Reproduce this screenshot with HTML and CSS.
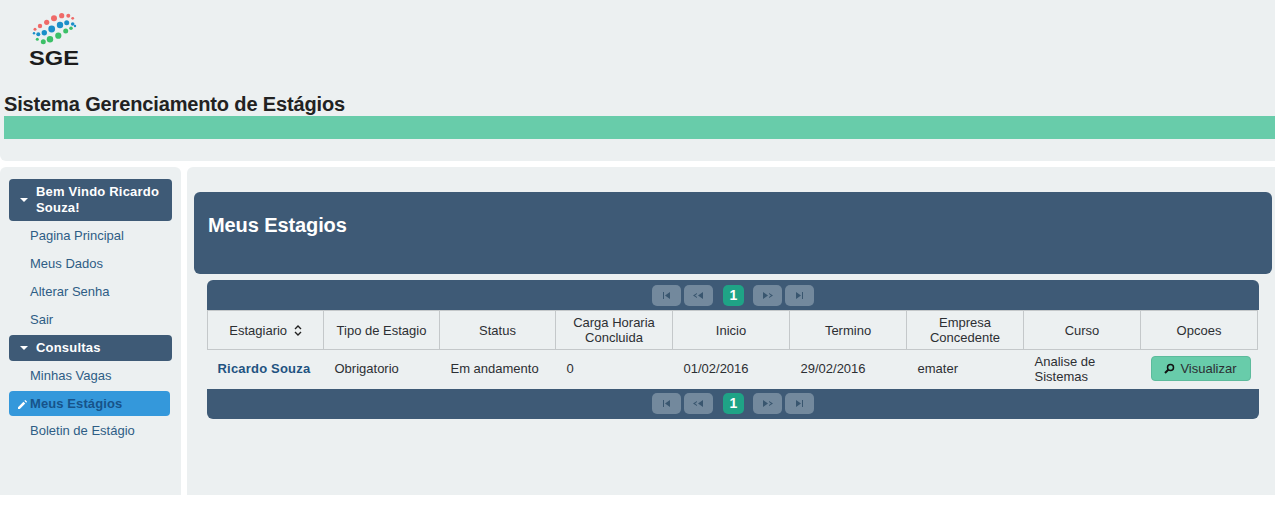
FILE: index.html
```html
<!DOCTYPE html>
<html lang="pt">
<head>
    <meta charset="UTF-8">
    <title>SGE</title>
    <link rel="stylesheet" href="styles.css">
</head>
<body>
    <div id="topo">
        <svg class="logo" width="60" height="58" viewBox="0 0 60 58">
            <g fill="#ef6a68">
                <circle cx="10" cy="21.3" r="1.5"/><circle cx="15" cy="18" r="2.2"/><circle cx="21.7" cy="14.3" r="2.6"/>
                <circle cx="29" cy="10.3" r="3"/><circle cx="36.7" cy="7.7" r="2.6"/><circle cx="43.3" cy="7.7" r="2"/>
                <circle cx="47.7" cy="10.3" r="1.4"/>
            </g>
            <g fill="#1b8fc9">
                <circle cx="9" cy="25.3" r="1.2"/><circle cx="13.3" cy="26.3" r="2"/><circle cx="19.3" cy="24.7" r="2.7"/>
                <circle cx="26.7" cy="21" r="3.4"/><circle cx="35" cy="17" r="3.2"/><circle cx="41.7" cy="14.7" r="2.5"/>
                <circle cx="47.7" cy="16" r="1.8"/><circle cx="50" cy="18" r="1.2"/>
            </g>
            <g fill="#3cc068">
                <circle cx="12.3" cy="31.3" r="1.5"/><circle cx="18.3" cy="33.7" r="2.5"/><circle cx="25" cy="31.3" r="3.2"/>
                <circle cx="33.3" cy="27.7" r="3.1"/><circle cx="40.7" cy="23" r="2.5"/><circle cx="46" cy="20.3" r="1.8"/>
            </g>
            <text x="4" y="57" class="logo-texto" textLength="50" lengthAdjust="spacingAndGlyphs">SGE</text>
        </svg>
        <h1>Sistema Gerenciamento de Estágios</h1>
        <div class="faixa"></div>
    </div>

    <div id="conteudo">
        <div id="menu">
            <h3 class="menu-titulo"><span class="seta"></span><span>Bem Vindo Ricardo Souza!</span></h3>
            <ul>
                <li><a>Pagina Principal</a></li>
                <li><a>Meus Dados</a></li>
                <li><a>Alterar Senha</a></li>
                <li><a>Sair</a></li>
            </ul>
            <h3 class="menu-titulo curto"><span class="seta"></span><span>Consultas</span></h3>
            <ul>
                <li><a>Minhas Vagas</a></li>
                <li class="ativo">
                    <svg width="10" height="10" viewBox="0 0 11 11"><path d="M0 11v-2l6-6 2 2-6 6zM7 2l1-1 2 2-1 1z" fill="#fff"/></svg>
                    <a>Meus Estágios</a>
                </li>
                <li class="ultimo"><a>Boletin de Estágio</a></li>
            </ul>
        </div>

        <div id="principal">
            <div class="painel-titulo">Meus Estagios</div>
            <div class="tabela">
                <div class="paginador">
                    <span class="pag"><svg width="9" height="7" viewBox="0 0 9 7"><path d="M1 0v7h1V0zM3 3.5L8 0v7z" fill="#39566f"/></svg></span>
                    <span class="pag"><svg width="11" height="7" viewBox="0 0 11 7"><path d="M0 3.5L4 1v1L2 3.5 4 5v1zM5 3.5L10 0v7z" fill="#39566f"/></svg></span>
                    <span class="num">1</span>
                    <span class="pag"><svg width="11" height="7" viewBox="0 0 11 7"><path d="M1 0l5 3.5L1 7zM7 1l4 2.5L7 6V5l2-1.5L7 2z" fill="#39566f"/></svg></span>
                    <span class="pag"><svg width="9" height="7" viewBox="0 0 9 7"><path d="M1 0l5 3.5L1 7zM7 0h1v7H7z" fill="#39566f"/></svg></span>
                </div>
                <table>
                    <colgroup>
                        <col class="col-a"><col class="col-a"><col class="col-a">
                        <col class="col-b"><col class="col-b"><col class="col-b"><col class="col-b"><col class="col-b">
                        <col class="col-b">
                    </colgroup>
                    <thead>
                        <tr>
                            <th>Estagiario <svg class="ordem" width="8" height="11" viewBox="0 0 8 11"><path d="M1 4l3-3 3 3M1 7l3 3 3-3" fill="none" stroke="#222" stroke-width="1.4"/></svg></th>
                            <th>Tipo de Estagio</th>
                            <th>Status</th>
                            <th>Carga Horaria Concluida</th>
                            <th>Inicio</th>
                            <th>Termino</th>
                            <th>Empresa Concedente</th>
                            <th>Curso</th>
                            <th>Opcoes</th>
                        </tr>
                    </thead>
                    <tbody>
                        <tr>
                            <td class="nome">Ricardo Souza</td>
                            <td>Obrigatorio</td>
                            <td>Em andamento</td>
                            <td>0</td>
                            <td>01/02/2016</td>
                            <td>29/02/2016</td>
                            <td>emater</td>
                            <td>Analise de Sistemas</td>
                            <td class="opcoes">
                                <button type="button">
                                    <svg width="11" height="11" viewBox="0 0 11 11"><circle cx="6.5" cy="4.5" r="3" fill="none" stroke="#111" stroke-width="1.5"/><path d="M4.5 6.5L1 10" stroke="#111" stroke-width="2"/></svg>
                                    Visualizar
                                </button>
                            </td>
                        </tr>
                    </tbody>
                </table>
                <div class="paginador baixo">
                    <span class="pag"><svg width="9" height="7" viewBox="0 0 9 7"><path d="M1 0v7h1V0zM3 3.5L8 0v7z" fill="#39566f"/></svg></span>
                    <span class="pag"><svg width="11" height="7" viewBox="0 0 11 7"><path d="M0 3.5L4 1v1L2 3.5 4 5v1zM5 3.5L10 0v7z" fill="#39566f"/></svg></span>
                    <span class="num">1</span>
                    <span class="pag"><svg width="11" height="7" viewBox="0 0 11 7"><path d="M1 0l5 3.5L1 7zM7 1l4 2.5L7 6V5l2-1.5L7 2z" fill="#39566f"/></svg></span>
                    <span class="pag"><svg width="9" height="7" viewBox="0 0 9 7"><path d="M1 0l5 3.5L1 7zM7 0h1v7H7z" fill="#39566f"/></svg></span>
                </div>
            </div>
        </div>
    </div>
</body>
</html>
```

FILE: styles.css
```css
body {
    font-family: "Liberation Sans", Arial, sans-serif;
    font-size: 13px;
    color: #2c2f33;
    background-color: #fff;
    margin: 0;
    padding: 0;
}
#topo {
    height: 161px;
    box-sizing: border-box;
    padding: 8px 0 0 4px;
    background-color: #ecf0f1;
    border-radius: 0 0 0 6px;
}
.logo {
    display: block;
    margin-left: 21px;
    overflow: visible;
}
.logo-texto {
    font-size: 20px;
    font-weight: bold;
    fill: #1c1c1c;
}
#topo h1 {
    font-size: 20px;
    font-weight: bold;
    line-height: 23px;
    letter-spacing: -0.14px;
    margin: 27px 0 0 0;
    color: #222;
}
.faixa {
    height: 23px;
    background-color: #68ccaa;
}
#conteudo {
    display: flex;
    gap: 6px;
    margin-top: 6px;
    height: 328px;
}
#menu {
    width: 181px;
    box-sizing: border-box;
    padding: 12px 9px 0 9px;
    background-color: #ecf0f1;
    border-radius: 6px 6px 0 0;
}
.menu-titulo {
    display: flex;
    align-items: center;
    gap: 8px;
    margin: 0;
    padding: 5px 10px 5px 11px;
    min-height: 32px;
    width: 163px;
    box-sizing: border-box;
    background-color: #3e5a76;
    color: #fff;
    font-size: 13px;
    line-height: 16px;
    letter-spacing: 0.2px;
    border-radius: 4px;
}
.menu-titulo.curto {
    min-height: 26px;
}
.seta {
    flex: none;
    width: 0;
    height: 0;
    border-left: 4px solid transparent;
    border-right: 4px solid transparent;
    border-top: 4px solid #fff;
}
#menu ul {
    list-style: none;
    margin: 0;
    padding: 1px 0;
}
#menu li {
    height: 28px;
    line-height: 28px;
    padding-left: 21px;
    color: #2e5d85;
}
#menu li.ativo {
    display: flex;
    align-items: center;
    gap: 2px;
    height: 25px;
    width: 161px;
    box-sizing: border-box;
    margin-top: 1px;
    padding-left: 9px;
    background-color: #3498db;
    border-radius: 4px;
    color: #17538a;
    font-weight: bold;
    letter-spacing: 0.1px;
}
#menu li.ultimo {
    margin-top: 1px;
}
#principal {
    flex: 1;
    padding: 25px 3px 0 7px;
    background-color: #ecf0f1;
    border-radius: 6px 0 0 0;
}
.painel-titulo {
    height: 82px;
    box-sizing: border-box;
    padding: 22px 14px 0 14px;
    background-color: #3e5a76;
    color: #fff;
    font-size: 20px;
    font-weight: bold;
    line-height: 23px;
    letter-spacing: -0.1px;
    border-radius: 6px;
}
.tabela {
    width: 1052px;
    margin: 6px 0 0 13px;
}
.paginador {
    display: flex;
    justify-content: center;
    align-items: center;
    gap: 3px;
    height: 30px;
    background-color: #3e5a76;
    border-radius: 6px 6px 0 0;
}
.paginador.baixo {
    border-radius: 0 0 6px 6px;
}
.pag {
    display: flex;
    align-items: center;
    justify-content: center;
    width: 29px;
    height: 21px;
    background-color: #73899d;
    border-radius: 5px;
}
.num {
    width: 21px;
    height: 21px;
    margin: 0 6px 0 7px;
    background-color: #1fa386;
    border-radius: 5px;
    color: #fff;
    font-size: 14px;
    font-weight: bold;
    line-height: 21px;
    text-align: center;
}
table {
    width: 1050px;
    table-layout: fixed;
    border-collapse: collapse;
}
.col-a {
    width: 116px;
}
.col-b {
    width: 117px;
}
th {
    height: 39px;
    padding: 0 10px;
    box-sizing: border-box;
    border: 1px solid #c4c8ca;
    font-weight: normal;
    line-height: 15px;
    text-align: center;
}
td {
    height: 39px;
    padding: 0 10px 1px 11px;
    box-sizing: border-box;
    line-height: 15px;
}
.ordem {
    margin-left: 3px;
    vertical-align: -1px;
}
td.nome {
    padding-left: 10px;
    color: #1f5381;
    font-weight: bold;
    letter-spacing: 0.2px;
}
td.opcoes {
    padding-left: 10px;
}
button {
    display: flex;
    align-items: center;
    justify-content: center;
    gap: 5px;
    width: 100px;
    height: 25px;
    padding: 0;
    background-color: #68ccaa;
    color: #2c2f33;
    font-family: inherit;
    font-size: 13px;
    border: 1px solid #5cbb9c;
    border-radius: 4px;
}
```
